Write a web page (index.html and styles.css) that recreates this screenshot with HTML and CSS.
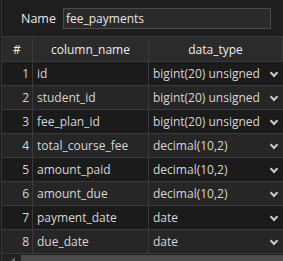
FILE: index.html
```html
<!DOCTYPE html>
<html lang="en">
<head>
    <meta charset="UTF-8">
    <title>Table editor</title>
    <link rel="stylesheet" href="styles.css">
</head>
<body>
    <div class="panel">
        <div class="name-row">
            <label class="name-label">Name</label>
            <div class="name-input">fee_payments</div>
        </div>
        <div class="grid">
            <div class="cell head num">#</div>
            <div class="cell head">column_name</div>
            <div class="cell head">data_type</div>

            <div class="cell num">1</div>
            <div class="cell col">id</div>
            <div class="cell type">bigint(20) unsigned<span class="chev"></span></div>

            <div class="cell num alt">2</div>
            <div class="cell col alt">student_id</div>
            <div class="cell type alt">bigint(20) unsigned<span class="chev"></span></div>

            <div class="cell num">3</div>
            <div class="cell col">fee_plan_id</div>
            <div class="cell type">bigint(20) unsigned<span class="chev"></span></div>

            <div class="cell num alt">4</div>
            <div class="cell col alt">total_course_fee</div>
            <div class="cell type alt">decimal(10,2)<span class="chev"></span></div>

            <div class="cell num">5</div>
            <div class="cell col">amount_paid</div>
            <div class="cell type">decimal(10,2)<span class="chev"></span></div>

            <div class="cell num alt">6</div>
            <div class="cell col alt">amount_due</div>
            <div class="cell type alt">decimal(10,2)<span class="chev"></span></div>

            <div class="cell num">7</div>
            <div class="cell col">payment_date</div>
            <div class="cell type">date<span class="chev"></span></div>

            <div class="cell num alt">8</div>
            <div class="cell col alt">due_date</div>
            <div class="cell type alt">date<span class="chev"></span></div>
        </div>
        <div class="hscroll">
            <div class="arrow"></div>
            <div class="thumb"></div>
        </div>
    </div>
</body>
</html>
```

FILE: styles.css
```css
body {
    margin: 0;
    background-color: #1e1e1e;
    font-family: "Open Sans", "Noto Sans", sans-serif;
    font-size: 12px;
    color: #d6d6d6;
    overflow: hidden;
}
.panel {
    margin-left: 1px;
    border-left: 1px solid #353535;
    height: 261px;
    box-sizing: border-box;
    overflow: hidden;
}
.name-row {
    display: flex;
    align-items: center;
    height: 36px;
    padding-left: 19px;
    box-sizing: border-box;
}
.name-label {
    width: 42px;
    color: #e8e8e8;
    font-size: 12.5px;
}
.name-input {
    width: 208px;
    height: 21px;
    box-sizing: border-box;
    border: 1px solid #4a4a4a;
    background-color: #2a2a2a;
    color: #e6e6e6;
    font-size: 12px;
    line-height: 19px;
    padding-left: 2px;
}
.grid {
    display: grid;
    grid-template-columns: 31px 116px 1fr;
    grid-auto-rows: 24px;
    grid-template-rows: 25px;
    border-top: 1px solid #3a3a3a;
}
.cell {
    display: flex;
    align-items: center;
    border-right: 1px solid #3a3a3a;
    border-bottom: 1px solid #3a3a3a;
    background-color: #1b1b1b;
    padding-left: 4px;
    white-space: nowrap;
    overflow: hidden;
}
.cell.alt {
    background-color: #262626;
}
.head {
    background-color: #2b2b2b;
    justify-content: center;
    padding-left: 0;
    color: #ececec;
}
.num {
    justify-content: flex-end;
    padding-left: 0;
    padding-right: 3px;
}
.head.num {
    justify-content: center;
    padding-right: 0;
}
.type {
    position: relative;
    border-right: none;
}
.chev {
    position: absolute;
    left: 122px;
    top: 8px;
    width: 4px;
    height: 4px;
    border-right: 2px solid #c8c8c8;
    border-bottom: 2px solid #c8c8c8;
    transform: rotate(45deg);
}
.hscroll {
    display: flex;
    height: 7px;
    margin-top: 1px;
    background-color: #232323;
}
.arrow {
    width: 19px;
    position: relative;
}
.arrow::after {
    content: "";
    position: absolute;
    left: 8px;
    top: 2px;
    border-right: 5px solid #6a6a6a;
    border-top: 5px solid transparent;
}
.thumb {
    flex: 1;
    background-color: #4b4b4b;
}
```
